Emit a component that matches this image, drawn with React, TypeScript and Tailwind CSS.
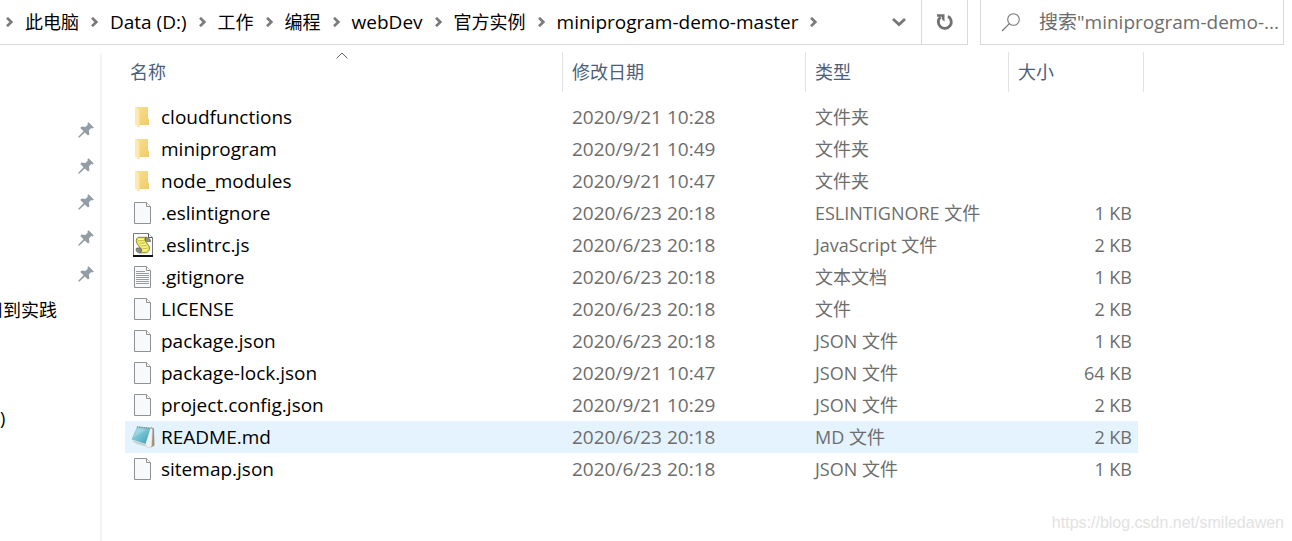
import { useState } from "react";
import { clsx } from "clsx";

type FileKind = "folder" | "blank" | "script" | "text" | "notepad";

interface FileEntry {
  name: string;
  modified: string;
  type: string;
  size?: string;
  kind: FileKind;
}

const PATH = [
  { label: "此电脑" },
  { label: "Data (D:)", latin: true },
  { label: "工作" },
  { label: "编程" },
  { label: "webDev", latin: true },
  { label: "官方实例" },
  { label: "miniprogram-demo-master", latin: true },
];

const FILES: FileEntry[] = [
  { name: "cloudfunctions", modified: "2020/9/21 10:28", type: "文件夹", kind: "folder" },
  { name: "miniprogram", modified: "2020/9/21 10:49", type: "文件夹", kind: "folder" },
  { name: "node_modules", modified: "2020/9/21 10:47", type: "文件夹", kind: "folder" },
  { name: ".eslintignore", modified: "2020/6/23 20:18", type: "ESLINTIGNORE 文件", size: "1 KB", kind: "blank" },
  { name: ".eslintrc.js", modified: "2020/6/23 20:18", type: "JavaScript 文件", size: "2 KB", kind: "script" },
  { name: ".gitignore", modified: "2020/6/23 20:18", type: "文本文档", size: "1 KB", kind: "text" },
  { name: "LICENSE", modified: "2020/6/23 20:18", type: "文件", size: "2 KB", kind: "blank" },
  { name: "package.json", modified: "2020/6/23 20:18", type: "JSON 文件", size: "1 KB", kind: "blank" },
  { name: "package-lock.json", modified: "2020/9/21 10:47", type: "JSON 文件", size: "64 KB", kind: "blank" },
  { name: "project.config.json", modified: "2020/9/21 10:29", type: "JSON 文件", size: "2 KB", kind: "blank" },
  { name: "README.md", modified: "2020/6/23 20:18", type: "MD 文件", size: "2 KB", kind: "notepad" },
  { name: "sitemap.json", modified: "2020/6/23 20:18", type: "JSON 文件", size: "1 KB", kind: "blank" },
];

const PINS = [1, 2, 3, 4, 5];

function FolderIcon() {
  return (
    <svg width="24" height="24" viewBox="0 0 24 24" aria-hidden="true">
      <defs>
        <linearGradient id="folder-back" x1="0" y1="0" x2="1" y2="1">
          <stop offset="0" stopColor="#f9df92" />
          <stop offset="1" stopColor="#efcb68" />
        </linearGradient>
      </defs>
      <path d="M5 2h12v11.500l1 .5v6H8z" fill="url(#folder-back)" />
      <path d="M4 2l1.500.4L8.500 5v15l-.5 2.800L4 19.500z" fill="#ffe9ab" />
      <path d="M8.500 5v15l-.5 2.500" fill="none" stroke="#f6d888" strokeWidth=".6" />
    </svg>
  );
}

function PageIcon({ lines = false }: { lines?: boolean }) {
  return (
    <svg width="24" height="24" viewBox="0 0 24 24" aria-hidden="true">
      <path d="M3.500 1.500h12l4 4v17h-16z" fill="#f8f9fa" stroke="#8f9193" />
      <path d="M15.500 1.500v4h4" fill="#fff" stroke="#8f9193" />
      {lines && (
        <path
          d="M5 6.500h9M5 8.500h13M5 10.500h13M5 12.500h13M5 14.500h13M5 16.500h13M5 18.500h13"
          stroke="#9a9c9e"
        />
      )}
    </svg>
  );
}

function ScriptIcon() {
  return (
    <svg width="24" height="24" viewBox="0 0 24 24" aria-hidden="true">
      <path d="M2.500.5h15l4 4v18h-19z" fill="#fff" stroke="#77797b" />
      <path d="M17.500.5v4h4" fill="#fff" stroke="#55585a" />
      <path d="M2 23h20" stroke="#111" strokeWidth="2" />
      <path d="M14 4.500c2-.4 5.500.3 5.500 4.100h-3.700L14 7z" fill="#8b8d88" stroke="#4b4b44" strokeWidth=".6" />
      <path
        d="M7 4.300h8.500c-1.700.8-2 2-1.300 3.500l3.600 5c1.500 2.900.2 7-3.500 7H8.200c2-.5 2.500-2 1.800-3.600L6.500 11.400C4.700 8.600 4.900 5.700 7 4.300z"
        fill="#ede85c"
        stroke="#6b6828"
        strokeWidth=".8"
      />
      <path d="M5.500 15h4.300c1.200 1.600.6 4.200-1.200 4.700-2.900.2-4.200-2.200-3.100-4.700z" fill="#8b8d88" stroke="#4b4b44" strokeWidth=".6" />
      <path d="M8 6.500h4.500M7.700 9l4-.2M10 11.500l4.500-.2M11.500 14h4M11.800 16.800h4" stroke="#fffcc8" />
      <path d="M7 7.800l5.500-.2M8.500 10.300l5-.3M10.500 12.800l5-.2M12 15.400h4" stroke="#b6ae2c" strokeWidth=".7" />
    </svg>
  );
}

function NotepadIcon() {
  return (
    <svg width="24" height="24" viewBox="0 0 24 24" aria-hidden="true">
      <defs>
        <linearGradient id="notepad-cover" x1="0" y1="0" x2="1" y2="1">
          <stop offset="0" stopColor="#a9dce6" />
          <stop offset=".5" stopColor="#74c0d2" />
          <stop offset="1" stopColor="#3c9ab3" />
        </linearGradient>
      </defs>
      <path d="M20 2l3 1.500.5 17-3.500 2z" fill="#9f8f79" />
      <path d="M19.500 3l2 1-.8 17.200-3.700 1.600L14 19z" fill="#f1f3f1" stroke="#bfc7c6" strokeWidth=".5" />
      <path d="M6 1.500L19.500 3 14.500 19 .5 14.500z" fill="url(#notepad-cover)" />
      <path d="M.5 14.500l14 4.500 2.500 3.500L6 19.500z" fill="#d3e0e2" />
      <path d="M2 16.500l12 3.500" stroke="#9fb9bf" strokeWidth=".6" />
      <path d="M6 1.800L19.500 3.200" stroke="#7f898a" strokeWidth="1.300" strokeDasharray="1 .8" />
      <path d="M6.500 3.500l9 1-13 8z" fill="#fff" opacity=".2" />
    </svg>
  );
}

function FileIcon({ kind }: { kind: FileKind }) {
  if (kind === "folder") return <FolderIcon />;
  if (kind === "script") return <ScriptIcon />;
  if (kind === "notepad") return <NotepadIcon />;
  return <PageIcon lines={kind === "text"} />;
}

function PinIcon() {
  return (
    <svg width="16" height="16" viewBox="0 0 16 16" fill="#929da5" aria-hidden="true">
      <path d="M10.600.2l5.200 5.200-1.300 1-1.300-.3-2.300 2.500.5 3.800-1.400 1.200-3.200-3.200L1.500 15.500l-1.300.3.300-1.300 5-5.300L2.300 6l1.200-1.400 3.800.5 2.500-2.300-.4-1.400z" />
    </svg>
  );
}

function Crumb() {
  return (
    <svg width="7" height="10" viewBox="0 0 7 10" className="shrink-0" aria-hidden="true">
      <path d="M1 .8L5.300 5 1 9.200" fill="none" stroke="#7a7a7a" strokeWidth="2.600" />
    </svg>
  );
}

function AddressBar() {
  return (
    <header className="flex h-[45px] items-stretch gap-3 pr-2">
      <div className="flex min-w-0 flex-1 border-r border-b border-[#d9d9d9]">
        <nav aria-label="路径" className="flex min-w-0 flex-1 items-center gap-3 pl-1.5 whitespace-nowrap">
          <Crumb />
          {PATH.map((part) => (
            <div key={part.label} className="flex items-center gap-3">
              <a href="#" className={clsx("leading-6 text-black", part.latin && "text-[19px]")}>
                {part.label}
              </a>
              <Crumb />
            </div>
          ))}
        </nav>
        <button type="button" aria-label="历史记录" className="flex w-11 items-center justify-center">
          <svg width="14" height="10" viewBox="0 0 14 10" aria-hidden="true">
            <path d="M1 2l6 5.500L13 2" fill="none" stroke="#777" strokeWidth="2.800" />
          </svg>
        </button>
        <button
          type="button"
          aria-label="刷新"
          className="flex w-[46px] items-center justify-center border-l border-[#d9d9d9]"
        >
          <svg width="18" height="18" viewBox="0 0 18 18" aria-hidden="true">
            <path d="M12 3.200A6.500 6.500 0 1 1 4.500 4" fill="none" stroke="#717171" strokeWidth="2.800" />
            <path d="M1 1.200h7.500v7.500L5.800 6V3.700H1z" fill="#717171" />
          </svg>
        </button>
      </div>
      <label className="flex w-[304px] items-center border-x border-b border-[#d9d9d9] pl-5">
        <svg width="20" height="20" viewBox="0 0 20 20" className="shrink-0" aria-hidden="true">
          <circle cx="12.500" cy="7.500" r="5.800" fill="none" stroke="#777" strokeWidth="1.100" />
          <path d="M8.400 11.600L1 19" stroke="#777" strokeWidth="1.300" />
        </svg>
        <input
          type="text"
          aria-label="搜索"
          placeholder={'搜索"miniprogram-demo-...'}
          className="ml-[18px] min-w-0 flex-1 text-[19px] outline-none placeholder:text-[#6d6d6d]"
        />
      </label>
    </header>
  );
}

function Sidebar() {
  return (
    <aside className="mt-2 w-[102px] shrink-0 overflow-hidden border-r-2 border-[#f5f5f5] pt-[59px]">
      <ul>
        {PINS.map((pin) => (
          <li key={pin} className="flex h-9 items-center justify-end pr-1.5">
            <PinIcon />
          </li>
        ))}
        <li className="flex h-9 items-center justify-end pr-[43px] whitespace-nowrap">用到实践</li>
        <li className="h-9" />
        <li className="h-9" />
        <li className="flex h-9 items-center">)</li>
      </ul>
    </aside>
  );
}

function FileTable() {
  const [selected, setSelected] = useState("README.md");

  return (
    <table className="w-full table-fixed border-collapse text-left">
      <colgroup>
        <col />
        <col className="w-[243px]" />
        <col className="w-[203px]" />
        <col className="w-[130px]" />
        <col className="w-1.5" />
      </colgroup>
      <thead className="text-[#4c607a]">
        <tr>
          <th className="p-0 pb-[9px] font-normal">
            <div className="relative flex h-10 items-center pl-[5px]">
              名称
              <svg width="12" height="7" viewBox="0 0 12 7" className="absolute top-0 left-1/2 -ml-2" aria-hidden="true">
                <path d="M.5 6.500L6 1l5.500 5.500" fill="none" stroke="#666" />
              </svg>
            </div>
          </th>
          <th className="p-0 pb-[9px] font-normal">
            <div className="flex h-10 items-center border-l border-[#e2e2e2] pl-[9px]">修改日期</div>
          </th>
          <th className="p-0 pb-[9px] font-normal">
            <div className="flex h-10 items-center border-l border-[#e2e2e2] pl-[9px]">类型</div>
          </th>
          <th colSpan={2} className="p-0 pb-[9px] font-normal">
            <div className="flex h-10 items-center border-x border-[#e2e2e2] pl-[9px]">大小</div>
          </th>
        </tr>
      </thead>
      <tbody className="text-[#6d6d6d]">
        {FILES.map((file) => {
          const cell = clsx("h-8 py-0", file.name === selected && "bg-[#e5f3ff]");
          return (
            <tr key={file.name} onClick={() => setSelected(file.name)}>
              <td className={clsx(cell, "pl-1.5 text-[19px] text-black")}>
                <div className="flex items-center gap-1.5">
                  <FileIcon kind={file.kind} />
                  {file.name}
                </div>
              </td>
              <td className={clsx(cell, "pl-2.5 text-[19px]")}>{file.modified}</td>
              <td className={clsx(cell, "pl-2.5")}>{file.type}</td>
              <td className={clsx(cell, "pr-1.5 text-right")}>{file.size}</td>
              <td className="p-0" />
            </tr>
          );
        })}
      </tbody>
    </table>
  );
}

export default function App() {
  return (
    <div
      lang="zh-CN"
      className="relative flex min-h-screen flex-col bg-white font-['Open_Sans','Noto_Sans_CJK_SC',sans-serif] text-[18px] leading-6 text-black"
    >
      <AddressBar />
      <div className="flex flex-1">
        <Sidebar />
        <main className="min-w-0 flex-1 pt-[7px] pr-[148px] pl-[23px]">
          <FileTable />
        </main>
      </div>
      <p className="absolute right-2 bottom-2 font-['Liberation_Sans',sans-serif] text-[16px] leading-5 text-[#e2e2e2]">
        https://blog.csdn.net/smiledawen
      </p>
    </div>
  );
}
